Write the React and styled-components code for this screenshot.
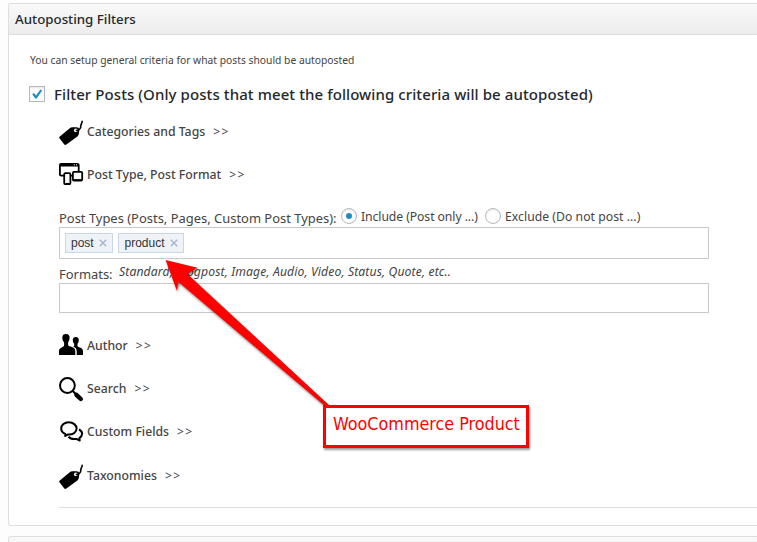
import React from 'react';
import styled, { createGlobalStyle, css } from 'styled-components';

const GlobalStyle = createGlobalStyle`
  * { box-sizing: border-box; }
  body {
    margin: 0;
    background: #fdfdfd;
    color: #444;
    font-family: 'Noto Sans', 'Open Sans', sans-serif;
    overflow: hidden;
  }
`;

const Page = styled.main`
  position: relative;
  display: flex;
  flex-direction: column;
  gap: 10px;
  height: 542px;
  padding: 3px 0 0 8px;
  overflow: hidden;
`;

const Panel = styled.section`
  flex: none;
  height: ${(p) => p.$height}px;
  border: 1px solid #dedede;
  border-right: 0;
  border-radius: 3px 0 0 3px;
  background: #fff;
`;

const PanelHeader = styled.header`
  display: flex;
  align-items: center;
  height: 31px;
  padding-left: 6px;
  border-bottom: 1px solid #dfdfdf;
  border-radius: 2px 0 0 0;
  background: linear-gradient(#f9f9f9, #ececec);
`;

const PanelTitle = styled.h3`
  margin: 0;
  font-size: 13.3px;
  font-weight: 500;
  line-height: 20px;
  color: #23282d;
`;

const PanelBody = styled.div`
  display: flex;
  flex-direction: column;
  padding: 18px 0 0 50px;
`;

const Description = styled.p`
  margin: 0 0 19px -29px;
  font-size: 10.3px;
  line-height: 14px;
`;

const FilterToggle = styled.label`
  display: flex;
  align-items: center;
  gap: 9px;
  height: 16px;
  margin: 0 0 18px -30px;
  font-size: 15px;
  font-weight: 500;
  letter-spacing: 0.09px;
  white-space: nowrap;
  color: #23282d;
`;

const Checkbox = styled.span`
  display: flex;
  width: 16px;
  height: 16px;
  border: 1px solid #b4b9be;
  background: #fff;
  box-shadow: inset 0 1px 2px rgba(0, 0, 0, 0.1);
`;

const Sections = styled.div`
  display: flex;
  flex-direction: column;
  gap: 19px;
`;

const SectionRow = styled.div`
  display: flex;
  align-items: center;
  height: 24px;
  margin-top: ${(p) => p.$shift || 0}px;
  gap: 4px;
  font-size: 12.25px;
  line-height: 23px;
  white-space: nowrap;
`;

const Icon = styled.svg`
  flex: none;
  width: 24px;
  height: 24px;
  overflow: visible;
`;

const SectionName = styled.span`
  height: 24px;
  font-weight: 500;
`;

const Expand = styled.span`
  height: 24px;
  margin-left: 4px;
  font-size: 12px;
  letter-spacing: 1.4px;
`;

const Fields = styled.div`
  display: flex;
  flex-direction: column;
  width: 650px;
  margin: 21px 0;
`;

const TypesLine = styled.div`
  display: flex;
  height: 19px;
  white-space: nowrap;
`;

const FieldLabel = styled.span`
  flex: none;
  width: ${(p) => p.$width}px;
  font-size: 12.95px;
  line-height: ${(p) => p.$line}px;
  white-space: nowrap;
`;

const RadioOption = styled.label`
  display: flex;
  gap: 4px;
  flex: none;
  width: 144px;
  font-size: 12.2px;
  line-height: 17px;
  letter-spacing: ${(p) => p.$spacing}px;
`;

const Radio = styled.span`
  display: flex;
  align-items: center;
  justify-content: center;
  flex: none;
  width: 16px;
  height: 16px;
  border: 1px solid #b4b9be;
  border-radius: 50%;
  background: #fff;
  box-shadow: inset 0 1px 2px rgba(0, 0, 0, 0.1);
  ${(p) => p.$checked && css`
    &::after {
      content: '';
      width: 6px;
      height: 6px;
      border-radius: 50%;
      background: #1e8cbe;
    }
  `}
`;

const TokenInput = styled.div`
  display: flex;
  align-items: flex-start;
  gap: 5px;
  height: ${(p) => p.$height}px;
  padding: 5px;
  border: 1px solid #c8c8c8;
  background: #fff;
`;

const Token = styled.span`
  display: flex;
  align-items: center;
  gap: 5.8px;
  height: 20px;
  padding: 0 5px;
  border: 1px solid #cad5e5;
  background: #eff2f7;
  font: 12px/18px 'Liberation Sans', Arial, sans-serif;
  color: #333;
`;

const Remove = styled.svg`
  width: 8px;
  height: 8px;
`;

const FormatsLine = styled.div`
  display: flex;
  height: 24px;
`;

const Hint = styled.em`
  font-size: 12.2px;
  line-height: 26px;
  letter-spacing: ${(p) => p.$spacing}px;
  white-space: nowrap;
`;

const Divider = styled.hr`
  width: 100%;
  height: 1px;
  margin: 19px 0 0;
  border: 0;
  background: #dedede;
`;

const Arrow = styled.svg`
  position: absolute;
  left: 160px;
  top: 250px;
  width: 180px;
  height: 165px;
  filter: drop-shadow(1px 2px 1px rgba(0, 0, 0, 0.45));
`;

const Callout = styled.div`
  position: absolute;
  left: 323px;
  top: 405px;
  width: 206px;
  height: 43px;
  padding-left: 7px;
  border: 3px solid #f00;
  background: #fff;
  box-shadow: 1px 2px 2px rgba(0, 0, 0, 0.4);
  font: 17.8px/31px 'DejaVu Sans Condensed', 'DejaVu Sans', sans-serif;
  font-stretch: condensed;
  white-space: nowrap;
  color: #f00;
`;

const TagIcon = () => (
  <Icon viewBox="0 0 24 24">
    <path d="M.5 16.7 10.8 8.2Q11.8 7.3 13.2 7.2L17.5 7.2Q20.4 7.4 20.4 10L19.8 14Q19.6 15.5 18.4 16.4L7.4 24.6Q6 25.6 5.1 24.3L.3 18Q-.1 17.3.5 16.7Z" fill="#000" />
    <circle cx="16.8" cy="10.4" r="1.8" fill="#fff" />
    <path d="M16.8 10.6C20 10.4 22 8.7 21.8 6.2C21.7 4 23.4 3.2 23.2.7" fill="none" stroke="#000" strokeWidth="1.6" />
  </Icon>
);

const DevicesIcon = () => (
  <Icon viewBox="0 0 24 24" fill="#fff" stroke="#000" strokeWidth="1.8">
    <rect x=".9" y=".9" width="18.8" height="11.7" rx="1.2" />
    <path d="M1 2.2H19.6" strokeWidth="2.6" />
    <path d="M14.7 1.8H15.8M17 1.8H18.1" stroke="#fff" strokeWidth="1" />
    <rect x="5.2" y="10.2" width="6.2" height="11" rx="1.3" />
    <path d="M6.7 20.8H9.9" strokeWidth="1.8" />
    <rect x="13.9" y="8.9" width="9.3" height="8.6" rx="1.1" />
    <path d="M14.6 17.1H22.5" strokeWidth="1.8" />
  </Icon>
);

const UsersIcon = () => (
  <Icon viewBox="0 0 24 24" fill="#000">
    <path d="M7 0C9.8 0 10.8 1.7 10.6 4.1C10.5 6.5 9.6 7.8 9.1 8.5V11C9.6 12.2 11 12.2 13 13.1C15.6 14.2 16.3 15.3 16.3 17.5V21H0V17C0 14.8 1.7 13.8 3.6 13C5 12.4 5.1 11.8 5.1 11V8.5C4.5 7.7 3.4 6.5 3.3 4.1C3.2 1.6 4.3 0 7 0Z" />
    <path d="M16.8 3C19 3 19.9 4.3 19.8 6.2C19.7 8.4 18.9 9.2 18.5 9.8V12C18.8 13.2 21.1 13.2 22.4 14.2C23.8 15.1 24 16.2 24 18V21H17.7V17.2C17.7 14.7 16.3 13.3 14.2 12.5C15.1 12.2 15.2 11.7 15.2 11V9.8C14.5 9.2 13.9 8.2 13.8 6.2C13.7 4.3 14.6 3 16.8 3Z" />
  </Icon>
);

const SearchIcon = () => (
  <Icon viewBox="0 0 24 24" fill="none" stroke="#000">
    <circle cx="8.4" cy="8.5" r="7.4" strokeWidth="2" />
    <path d="M13.5 13.8 16.5 16.8" strokeWidth="2" />
    <path d="M17.4 17.8 21.8 22" strokeWidth="4.4" strokeLinecap="round" />
  </Icon>
);

const ChatIcon = () => (
  <Icon viewBox="0 0 24 24" fill="none" stroke="#000" strokeWidth="2" strokeLinejoin="round">
    <path d="M6.4 14C3.8 13 2.2 11 2.2 8.6C2.2 5 5.5 2.3 9.8 2.3C14.1 2.3 17.6 5 17.6 8.6C17.6 12.2 14.1 14.6 9.8 14.6H8.7L6.2 16Z" />
    <path d="M20 9.5C22 10.4 23.1 12 23.1 13.8C23.1 15.6 22 17 20.5 17.9L20.7 20.5L17.4 18.9C13.5 19.4 11 18.6 9.5 16.6" />
  </Icon>
);

const Section = ({ icon: Glyph, name, shift }) => (
  <SectionRow $shift={shift}>
    <Glyph />
    <SectionName>{name}</SectionName>
    <Expand>&gt;&gt;</Expand>
  </SectionRow>
);

const TypeToken = ({ name }) => (
  <Token>
    {name}
    <Remove viewBox="0 0 8 8">
      <path d="M.8.8 7.2 7.2M7.2.8.8 7.2" stroke="#a6b4ce" strokeWidth="1.4" />
    </Remove>
  </Token>
);

export default function App() {
  return (
    <Page>
      <GlobalStyle />
      <Panel $height={523}>
        <PanelHeader>
          <PanelTitle>Autoposting Filters</PanelTitle>
        </PanelHeader>
        <PanelBody>
          <Description>You can setup general criteria for what posts should be autoposted</Description>
          <FilterToggle>
            <Checkbox>
              <svg width="14" height="14" viewBox="0 0 14 14">
                <path d="M2.2 7.2 4 6 6 8.4 10.4 2.6 12.2 3.6 6.6 11.4H5.2Z" fill="#1e8cbe" />
              </svg>
            </Checkbox>
            Filter Posts (Only posts that meet the following criteria will be autoposted)
          </FilterToggle>
          <Sections>
            <Section icon={TagIcon} name="Categories and Tags" />
            <Section icon={DevicesIcon} name="Post Type, Post Format" />
          </Sections>
          <Fields>
            <TypesLine>
              <FieldLabel $width={282} $line={21}>Post Types (Posts, Pages, Custom Post Types):</FieldLabel>
              <RadioOption $spacing={-0.07}><Radio $checked />Include (Post only ...)</RadioOption>
              <RadioOption $spacing={0.04}><Radio />Exclude (Do not post ...)</RadioOption>
            </TypesLine>
            <TokenInput $height={32}>
              <TypeToken name="post" />
              <TypeToken name="product" />
            </TokenInput>
            <FormatsLine>
              <FieldLabel $width={60} $line={30}>Formats:</FieldLabel>
              <Hint $spacing={0.11}>Standard, Blogpost, Image, Audio, Video, Status, Quote, etc..</Hint>
            </FormatsLine>
            <TokenInput $height={30} />
          </Fields>
          <Sections>
            <Section icon={UsersIcon} name="Author" />
            <Section icon={SearchIcon} name="Search" />
            <Section icon={ChatIcon} name="Custom Fields" />
            <Section icon={TagIcon} name="Taxonomies" shift={1} />
          </Sections>
          <Divider />
        </PanelBody>
      </Panel>
      <Panel $height={40}>
        <PanelHeader />
      </Panel>
      <Arrow viewBox="160 250 180 165">
        <path d="M165.6 260 197.5 267.8 187.5 274 330 406H325L178.5 282 176.8 290.5Z" fill="#f00" />
      </Arrow>
      <Callout>WooCommerce Product</Callout>
    </Page>
  );
}
